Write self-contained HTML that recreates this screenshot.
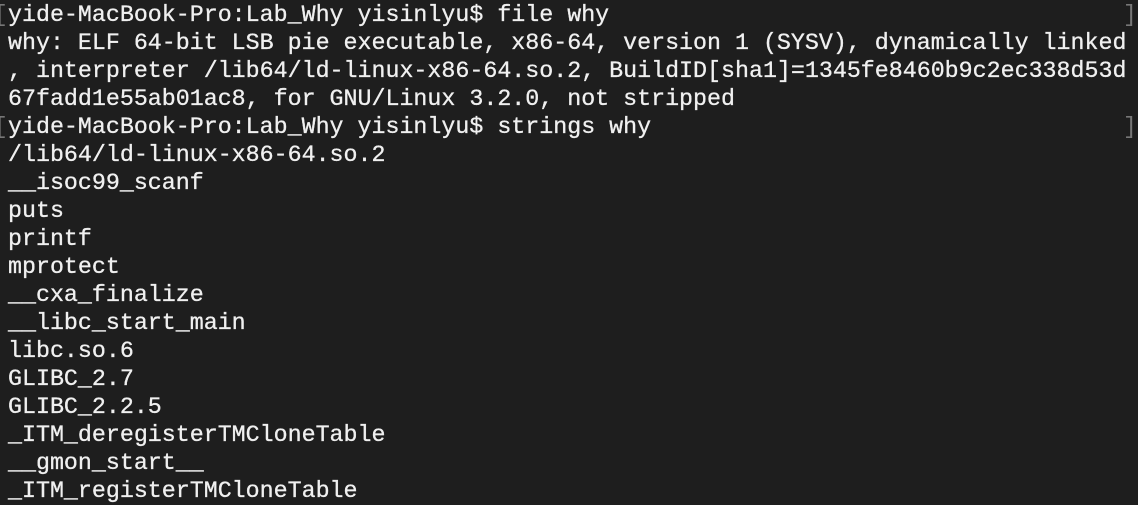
<!DOCTYPE html>
<html><head><style>
html,body{margin:0;padding:0;background:#1e1e1e;width:1138px;height:504px;overflow:hidden}
pre{margin:0;position:absolute;left:8px;top:1px;font-family:"Liberation Mono",monospace;font-size:23.3px;line-height:28px;color:#f0f0f0;letter-spacing:0;-webkit-text-stroke:0.3px #f0f0f0}
.b{position:absolute;color:#777;font-family:"Liberation Mono",monospace;font-size:23px;line-height:28px}
</style></head><body>
<div class="b" style="left:-6px;top:1px">[</div><div class="b" style="left:1123px;top:1px">]</div>
<div class="b" style="left:-6px;top:113px">[</div><div class="b" style="left:1123px;top:113px">]</div>
<pre>yide-MacBook-Pro:Lab_Why yisinlyu$ file why
why: ELF 64-bit LSB pie executable, x86-64, version 1 (SYSV), dynamically linked
, interpreter /lib64/ld-linux-x86-64.so.2, BuildID[sha1]=1345fe8460b9c2ec338d53d
67fadd1e55ab01ac8, for GNU/Linux 3.2.0, not stripped
yide-MacBook-Pro:Lab_Why yisinlyu$ strings why
/lib64/ld-linux-x86-64.so.2
__isoc99_scanf
puts
printf
mprotect
__cxa_finalize
__libc_start_main
libc.so.6
GLIBC_2.7
GLIBC_2.2.5
_ITM_deregisterTMCloneTable
__gmon_start__
_ITM_registerTMCloneTable</pre>
</body></html>
